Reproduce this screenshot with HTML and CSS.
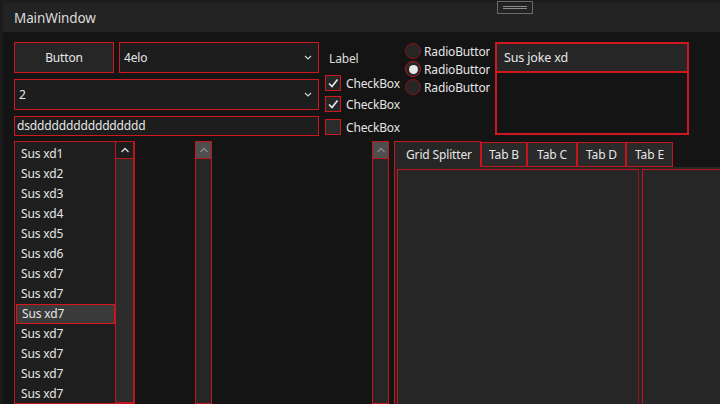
FILE: index.html
```html
<!DOCTYPE html>
<html>
<head>
<meta charset="utf-8">
<link rel="stylesheet" href="styles.css">
</head>
<body>
<div class="topstrip"></div>
<div class="grip"><span></span><span></span></div>
<div class="frame">
  <div class="leftedge"></div>
  <div class="window">
    <div class="titlebar">MainWindow</div>
    <div class="content">
      <div class="toprow">
        <div class="leftcol">
          <div class="row1">
            <div class="btn">Button</div>
            <div class="combo"><span>4elo</span><svg class="arrow" width="8" height="5" viewBox="0 0 8 5"><polyline points="1,1 4,4 7,1" fill="none" stroke="#cfcfcf" stroke-width="1.2"/></svg></div>
          </div>
          <div class="combo combo2"><span>2</span><svg class="arrow" width="8" height="5" viewBox="0 0 8 5"><polyline points="1,1 4,4 7,1" fill="none" stroke="#cfcfcf" stroke-width="1.2"/></svg></div>
          <div class="textbox">dsdddddddddddddddd</div>
        </div>
        <div class="checkcol">
          <div class="label">Label</div>
          <div class="check c1"><div class="box"><svg width="14" height="14" viewBox="0 0 14 14"><polyline points="3,7.5 6,10.5 11.5,3.5" fill="none" stroke="#e8e8e8" stroke-width="1.7"/></svg></div><span>CheckBox</span></div>
          <div class="check c2"><div class="box"><svg width="14" height="14" viewBox="0 0 14 14"><polyline points="3,7.5 6,10.5 11.5,3.5" fill="none" stroke="#e8e8e8" stroke-width="1.7"/></svg></div><span>CheckBox</span></div>
          <div class="check c3"><div class="box empty"></div><span>CheckBox</span></div>
        </div>
        <div class="radiocol">
          <div class="radio"><div class="circle"></div><span>RadioButton</span></div>
          <div class="radio"><div class="circle on"><i></i></div><span>RadioButton</span></div>
          <div class="radio"><div class="circle"></div><span>RadioButton</span></div>
        </div>
        <div class="listtop">
          <div class="topitem">Sus joke xd</div>
        </div>
      </div>
      <div class="bottomrow">
        <div class="listbox">
          <div class="items">
            <div class="item">Sus xd1</div>
            <div class="item">Sus xd2</div>
            <div class="item">Sus xd3</div>
            <div class="item">Sus xd4</div>
            <div class="item">Sus xd5</div>
            <div class="item">Sus xd6</div>
            <div class="item">Sus xd7</div>
            <div class="item">Sus xd7</div>
            <div class="item selected">Sus xd7</div>
            <div class="item">Sus xd7</div>
            <div class="item">Sus xd7</div>
            <div class="item">Sus xd7</div>
            <div class="item">Sus xd7</div>
          </div>
          <div class="vscroll">
            <div class="upbtn"><svg width="10" height="6" viewBox="0 0 10 6"><polyline points="1.5,5 5,1.5 8.5,5" fill="none" stroke="#e0e0e0" stroke-width="1.3"/></svg></div>
            <div class="track"></div>
          </div>
        </div>
        <div class="sb sb1">
          <div class="sbbtn"><svg width="10" height="6" viewBox="0 0 10 6"><polyline points="1.5,5 5,1.5 8.5,5" fill="none" stroke="#8a8a8a" stroke-width="1.3"/></svg></div>
        </div>
        <div class="sb sb2">
          <div class="sbbtn"><svg width="10" height="6" viewBox="0 0 10 6"><polyline points="1.5,5 5,1.5 8.5,5" fill="none" stroke="#8a8a8a" stroke-width="1.3"/></svg></div>
        </div>
        <div class="tabctl">
          <div class="tabs">
            <div class="tab sel">Grid Splitter</div>
            <div class="tab tb">Tab B</div>
            <div class="tab tc">Tab C</div>
            <div class="tab td">Tab D</div>
            <div class="tab te">Tab E</div>
          </div>
          <div class="panel">
            <div class="cell cell1"></div>
            <div class="cell cell2"></div>
          </div>
        </div>
      </div>
    </div>
  </div>
</div>
</body>
</html>
```
FILE: styles.css
```css
* { box-sizing: border-box; }
html, body {
  margin: 0;
  padding: 0;
  width: 720px;
  height: 404px;
  overflow: hidden;
  background: #141414;
  font-family: "Noto Sans", "Open Sans", sans-serif;
  font-size: 12px;
  letter-spacing: -0.15px;
  color: #e6e6e6;
}
.topstrip {
  height: 3px;
  background: #1d1d1d;
}
.grip {
  position: absolute;
  left: 497px;
  top: 1px;
  width: 36px;
  height: 13px;
  border: 1px solid #6a6a6a;
  display: flex;
  flex-direction: column;
  align-items: center;
  padding-top: 4px;
  gap: 1px;
}
.grip span {
  display: block;
  width: 24px;
  height: 1px;
  background: #8c8c8c;
}
.frame {
  display: flex;
  height: 401px;
}
.leftedge {
  width: 3px;
  background: #1c1c1c;
  flex: none;
}
.window {
  flex: 1;
  display: flex;
  flex-direction: column;
  min-width: 0;
}
.titlebar {
  height: 29px;
  flex: none;
  background: #232323;
  color: #dcdcdc;
  font-size: 13.5px;
  letter-spacing: -0.1px;
  padding-left: 11px;
  line-height: 30px;
}
.content {
  flex: 1;
  padding: 10px 0 0 11px;
  display: flex;
  flex-direction: column;
  gap: 5px;
  min-height: 0;
}
.toprow {
  display: flex;
  height: 94px;
  flex: none;
}
.leftcol {
  width: 305px;
  display: flex;
  flex-direction: column;
  gap: 6px;
}
.row1 {
  display: flex;
  gap: 5px;
}
.btn {
  width: 100px;
  height: 31px;
  border: 1px solid #d0161e;
  background: #262626;
  display: flex;
  align-items: center;
  justify-content: center;
}
.combo {
  flex: 1;
  height: 31px;
  border: 1px solid #d0161e;
  background: #1d1d1d;
  display: flex;
  align-items: center;
  justify-content: space-between;
  padding: 0 6px 0 4px;
}
.combo2 {
  flex: none;
  padding-left: 4px;
}
.textbox {
  height: 20px;
  border: 1px solid #d0161e;
  background: #1d1d1d;
  padding-left: 2px;
  line-height: 18px;
}
.checkcol {
  width: 80px;
  margin-left: 6px;
  display: flex;
  flex-direction: column;
}
.label {
  height: 33px;
  line-height: 34px;
  padding-left: 4px;
  color: #dedede;
}
.check {
  display: flex;
  align-items: center;
  gap: 5px;
  height: 16px;
}
.c2 { margin-top: 5px; }
.c3 { margin-top: 7px; }
.box {
  width: 16px;
  height: 16px;
  border: 1px solid #d0161e;
  background: #262626;
  display: flex;
  align-items: center;
  justify-content: center;
}
.box.empty { background: #2b2b2b; }
.radiocol {
  width: 85px;
  overflow: hidden;
  display: flex;
  flex-direction: column;
}
.radio {
  height: 18px;
  display: flex;
  align-items: center;
  gap: 3px;
  white-space: nowrap;
}
.circle {
  width: 16px;
  height: 16px;
  flex: none;
  border-radius: 50%;
  border: 1.5px solid #8e1016;
  background: #262626;
  display: flex;
  align-items: center;
  justify-content: center;
}
.circle.on { border-color: #b8141c; }
.circle i {
  display: block;
  width: 9px;
  height: 9px;
  border-radius: 50%;
  background: #e6e6e6;
}
.listtop {
  width: 194px;
  height: 93px;
  margin-left: 5px;
  border: 2px solid #d0161e;
}
.topitem {
  height: 29px;
  border-bottom: 2px solid #d0161e;
  background: #262626;
  padding-left: 7px;
  line-height: 27px;
  font-size: 12.5px;
}
.bottomrow {
  flex: 1;
  display: flex;
  min-height: 0;
}
.listbox {
  width: 121px;
  border: 1px solid #c0141c;
  background: #1e1e1e;
  display: flex;
  flex: none;
}
.items {
  width: 100px;
  padding-top: 2px;
}
.item {
  height: 20px;
  line-height: 20px;
  padding-left: 6px;
}
.item.selected {
  margin-left: 1px;
  border: 1px solid #d8161e;
  background: #3a3a3a;
  padding-left: 5px;
  line-height: 18px;
}
.vscroll {
  width: 19px;
  border: 1px solid #c0141c;
  border-top: none;
  display: flex;
  flex-direction: column;
}
.upbtn {
  height: 17px;
  border-bottom: 1px solid #c0141c;
  background: #1c1c1c;
  display: flex;
  align-items: center;
  justify-content: center;
}
.track {
  flex: 1;
  background: #2c2c2c;
}
.sb {
  width: 17px;
  flex: none;
  border: 1px solid #c0141c;
  background: #262626;
}
.sb1 { margin-left: 60px; }
.sb2 { margin-left: 160px; }
.sbbtn {
  height: 17px;
  border-bottom: 1px solid #c0141c;
  background: #4e4e4e;
  display: flex;
  align-items: center;
  justify-content: center;
}
.tabctl {
  margin-left: 5px;
  width: 360px;
  flex: none;
  display: flex;
  flex-direction: column;
}
.tabs {
  height: 26px;
  display: flex;
  align-items: flex-end;
}
.tab {
  height: 25px;
  border: 1px solid #c8141c;
  background: #2a2a2a;
  display: flex;
  align-items: center;
  justify-content: center;
  white-space: nowrap;
}
.tab.sel {
  height: 26px;
  width: 87px;
  border-bottom: none;
  background: #262626;
  justify-content: flex-start;
  padding-left: 11px;
}
.tb { width: 46px; }
.tc { width: 50px; }
.td { width: 49px; }
.te { width: 47px; }
.panel {
  flex: 1;
  background: #262626;
  border-left: 1px solid #c8141c;
  padding: 2px 0 0 2px;
  display: grid;
  grid-template-columns: 242px 1fr;
  column-gap: 3px;
}
.cell {
  border: 1px solid #c0141c;
  border-bottom: none;
}
.cell1 { border-right-color: #9a1016; }
```
